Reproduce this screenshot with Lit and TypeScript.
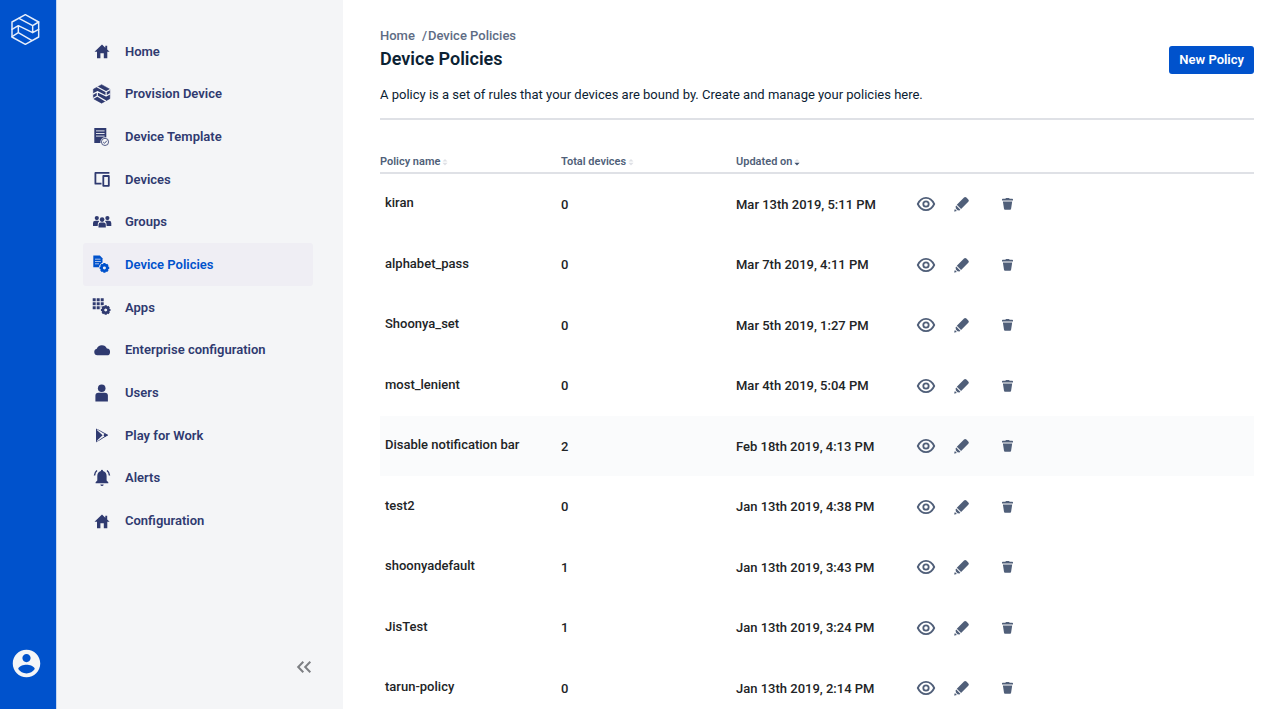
import { LitElement, html, css, svg } from "lit";
import { customElement, state } from "lit/decorators.js";
import { classMap } from "lit/directives/class-map.js";

const gear = (cx: number, cy: number) => svg`
  <g transform="translate(${cx} ${cy})">
    <circle r="5.6" fill="var(--icon-bg)"></circle>
    <circle r="2.8" fill="none" stroke="currentColor" stroke-width="2.6"></circle>
    <path d="M0-4.8V-3M0 3v1.8M-4.8 0H-3M3 0h1.8M-3.4-3.4l1.2 1.2M2.2 2.2l1.2 1.2M-3.4 3.4l1.2-1.2M2.2-2.2l1.2-1.2" stroke="currentColor" stroke-width="2.2"></path>
  </g>`;

const hexLines = svg`<path d="M56 55l41 22v21l-43-21v21l40 23M97 77l18-11M97 98l18-10M54 77l-19 11M54 98l-19 12"></path>`;

const home = svg`<path fill="currentColor" d="M10 3.6 2.5 10.8H5v6.5h3.4v-5h3.4v5h3.5v-6.5h2.3l-2.4-2.3V4.7h-1.9v2z"></path>`;

const icons = {
  home,
  provision: svg`<g transform="translate(1.2 .7) scale(.205) translate(-34 -43)" stroke-linejoin="round">
      <path d="M75 43l40 22v46l-40 22-40-22V65z" fill="currentColor" stroke="currentColor" stroke-width="3"></path>
      <g fill="none" stroke="var(--icon-bg)" stroke-width="6">
        <path d="M52 53l45 24 20-11M33 89l21-12 43 21 20-11M33 110l21-12 42 25M54 77v21M97 77v21"></path>
      </g></g>`,
  template: svg`<path fill="currentColor" d="M2.3 1h12v15h-12z"></path>
    <path d="M4 3.9h8.6M4 6.5h8.6M4 9.1h8.6" stroke="var(--icon-bg)" stroke-width=".9"></path>
    <circle cx="13" cy="14.9" r="4.6" fill="var(--icon-bg)"></circle>
    <circle cx="13" cy="14.9" r="3.6" fill="none" stroke="currentColor" stroke-width=".8"></circle>
    <path d="M11.2 15l1.3 1.3 2.4-2.6" fill="none" stroke="currentColor" stroke-width=".9"></path>`,
  devices: svg`<g fill="none" stroke="currentColor" stroke-width="1.8" stroke-linejoin="round">
    <path d="M17.4 3.9H3.4v10.8h6.1"></path><path d="M11.3 7h5.5v9.8h-5.5z"></path></g>`,
  groups: svg`<g fill="currentColor"><circle cx="4.8" cy="6.1" r="2.1"></circle><circle cx="15.4" cy="6.1" r="2.1"></circle>
    <path d="M1 14v-3q0-2.3 2.3-2.3h3q.6 0 1 .4Q5.4 10.600 5.700 14zM19.300 14v-3q0-2.300-2.300-2.300h-3q-.6 0-1 .4 1.900 1.500 1.600 4.900z"></path>
    <circle cx="10.100" cy="7.600" r="2.300"></circle><path d="M6.500 15.400v-2.700q0-2.300 2.300-2.300h2.700q2.300 0 2.300 2.300v2.700z"></path></g>`,
  policies: svg`<path fill="currentColor" d="M1.300.6h6.500l2.700 2.700v9H1.300z"></path>
    <path d="M3 4.200h5.500M3 6.500h5.800M3 8.800h4" stroke="var(--icon-bg)" stroke-width=".7"></path>${gear(12.400, 12.900)}`,
  apps: svg`<path fill="currentColor" d="M.7 1.300h3v3h-3zM4.700 1.300h3v3h-3zM8.700 1.300h3v3h-3zM.7 5.300h3v3h-3zM4.700 5.300h3v3h-3zM8.700 5.300h3v3h-3zM.7 9.300h3v3h-3zM4.700 9.300h3v3h-3zM8.700 9.300h3v3h-3z"></path>${gear(13.700, 13)}`,
  cloud: svg`<path fill="currentColor" d="M5.300 15.300a3.300 3.300 0 0 1-.5-6.500 5.400 5.400 0 0 1 10.100-.3 3.400 3.400 0 0 1-.5 6.800z"></path>`,
  users: svg`<g fill="currentColor"><circle cx="9.700" cy="5.200" r="3.800"></circle><path d="M3.400 18.500v-5.800q0-3 3-3h6.500q3 0 3 3v5.800z"></path></g>`,
  play: svg`<path d="M4.500 4l11 6-11 6.800z" fill="none" stroke="currentColor" stroke-width=".9" stroke-linejoin="round"></path>
    <path fill="currentColor" d="M4 4.300l6.600 5.900L4 16.500zM12.800 8.400l3.300 1.800-3.300 1.900-1.600-1.900z"></path>
    <path d="M5 4l7 6.200-7 6.500" fill="none" stroke="var(--icon-bg)" stroke-width=".5"></path>`,
  alerts: svg`<g fill="currentColor"><path d="M10 1.800q1 0 1 1.200 3.600 1 3.600 5v4.600l1.700 1.700v1H3.600v-1l1.700-1.700V8q0-4 3.600-5 0-1.200 1.100-1.200zM8.300 16.400h3.400q-.3 1.700-1.700 1.700t-1.700-1.700z"></path>
    <path d="M5 2.500Q2.700 4.200 2.500 7.500M15 2.500q2.300 1.700 2.500 5" fill="none" stroke="currentColor" stroke-width="1.500"></path></g>`,
};

type IconName = keyof typeof icons;

const NAV: { label: string; icon: IconName }[] = [
  { label: "Home", icon: "home" },
  { label: "Provision Device", icon: "provision" },
  { label: "Device Template", icon: "template" },
  { label: "Devices", icon: "devices" },
  { label: "Groups", icon: "groups" },
  { label: "Device Policies", icon: "policies" },
  { label: "Apps", icon: "apps" },
  { label: "Enterprise configuration", icon: "cloud" },
  { label: "Users", icon: "users" },
  { label: "Play for Work", icon: "play" },
  { label: "Alerts", icon: "alerts" },
  { label: "Configuration", icon: "home" },
];

const POLICIES: [string, number, string][] = [
  ["kiran", 0, "Mar 13th 2019, 5:11 PM"],
  ["alphabet_pass", 0, "Mar 7th 2019, 4:11 PM"],
  ["Shoonya_set", 0, "Mar 5th 2019, 1:27 PM"],
  ["most_lenient", 0, "Mar 4th 2019, 5:04 PM"],
  ["Disable notification bar", 2, "Feb 18th 2019, 4:13 PM"],
  ["test2", 0, "Jan 13th 2019, 4:38 PM"],
  ["shoonyadefault", 1, "Jan 13th 2019, 3:43 PM"],
  ["JisTest", 1, "Jan 13th 2019, 3:24 PM"],
  ["tarun-policy", 0, "Jan 13th 2019, 2:14 PM"],
];

@customElement("side-nav")
export class SideNav extends LitElement {
  @state() private active = "Device Policies";

  static styles = css`
    :host { display: flex; }
    .rail {
      display: flex; flex-direction: column; justify-content: space-between; align-items: center;
      box-sizing: border-box; width: 57px; padding: 13px 4px 29px 0;
      background: #0052cc; border-right: 1px solid #c5d7f1;
    }
    button { padding: 0; border: 0; background: none; cursor: pointer; display: block; }
    svg { display: block; }
    .logo { width: 30px; height: 33px; }
    .avatar { width: 33px; height: 33px; color: #f4f5f7; }
    .panel {
      display: flex; flex-direction: column; justify-content: space-between;
      box-sizing: border-box; width: 286px; padding: 30px 30px 34px 26px; background: #f4f5f7;
    }
    .list { display: grid; grid-auto-rows: 1fr; min-height: 512px; margin: 0; padding: 0; list-style: none; }
    .item {
      --icon-bg: #f4f5f7;
      display: flex; align-items: center; gap: 13px; box-sizing: border-box; height: 100%; padding-left: 9px;
      border-radius: 3px; color: #2f3a70; font-size: 13px; font-weight: 600; text-decoration: none;
    }
    .item.active { --icon-bg: #efeef4; background: #efeef4; color: #0052cc; }
    .icon { width: 20px; height: 20px; flex: none; }
    .collapse { align-self: flex-end; color: #7d7f83; }
  `;

  render() {
    return html`
      <div class="rail">
        <svg class="logo" viewBox="32 39 90 99" fill="none" stroke="#e6eefb" stroke-width="4.400" stroke-linejoin="round" stroke-linecap="round" role="img" aria-label="Logo">
          <path d="M75 44l40 22v45l-40 22-40-22V66z"></path>${hexLines}
        </svg>
        <button aria-label="Account">
          <svg class="avatar" viewBox="0 0 24 24"><path fill="currentColor" d="M12 2C6.480 2 2 6.480 2 12s4.480 10 10 10 10-4.480 10-10S17.520 2 12 2zm0 3c1.660 0 3 1.340 3 3s-1.340 3-3 3-3-1.340-3-3 1.340-3 3-3zm0 14.200c-2.500 0-4.710-1.280-6-3.220.03-1.990 4-3.080 6-3.080s5.970 1.090 6 3.080c-1.290 1.940-3.500 3.220-6 3.220z"></path></svg>
        </button>
      </div>
      <nav class="panel">
        <ul class="list">
          ${NAV.map((n) => html`<li>
            <a class=${classMap({ item: true, active: n.label === this.active })} href="#" @click=${(e: Event) => { e.preventDefault(); this.active = n.label; }}>
              <svg class="icon" viewBox="0 0 20 20" aria-hidden="true">${icons[n.icon]}</svg>
              <span>${n.label}</span>
            </a></li>`)}
        </ul>
        <button class="collapse" aria-label="Collapse menu">
          <svg width="18" height="16" viewBox="0 0 18 16" fill="none" stroke="currentColor" stroke-width="2"><path d="M8.300 2.800 3.200 8l5.100 5.200M15.300 2.800 10.200 8l5.100 5.200"></path></svg>
        </button>
      </nav>`;
  }
}

@customElement("policy-table")
export class PolicyTable extends LitElement {
  static styles = css`
    :host { display: block; }
    table { width: 100%; border-collapse: separate; border-spacing: 0; table-layout: fixed; }
    .name { width: 181px; }
    .total { width: 175px; }
    .updated { width: 180px; }
    th { padding: 0 0 3px; border-bottom: 2px solid #dfe1e6; text-align: left; line-height: 14px; }
    td { padding: 0; }
    .sort {
      display: flex; align-items: center; gap: 2px; padding: 0; border: 0; background: none;
      font: 600 11px/14px var(--font); color: #505f79; cursor: pointer;
    }
    .row { height: 60px; font-size: 13px; font-weight: 500; color: #222426; }
    .row:nth-child(even) { height: 61px; }
    .row.shaded { background: #fafbfc; }
    .row .label { padding: 0 0 3px 5px; }
    .actions { display: flex; align-items: center; gap: 16px; color: #505f79; }
    .actions button { width: 20px; height: 20px; padding: 0; border: 0; background: none; color: inherit; cursor: pointer; }
    .actions button:last-child { margin-left: 10px; }
    svg { display: block; }
  `;

  private header(label: string, sorted = false) {
    return html`<button class="sort">${label}
      <svg width="6" height="8" viewBox="0 0 6 8"><path d="M3 1l2.500 2.500h-5z" fill="#dfe1e6"></path><path d="M3 7.400L.4 4.800h5.200z" fill=${sorted ? "#42526e" : "#dfe1e6"}></path></svg>
    </button>`;
  }

  render() {
    return html`<table>
      <thead><tr>
        <th class="name">${this.header("Policy name")}</th>
        <th class="total">${this.header("Total devices")}</th>
        <th class="updated">${this.header("Updated on", true)}</th>
        <th></th>
      </tr></thead>
      <tbody>
        ${POLICIES.map(([name, total, updated]) => html`<tr class=${classMap({ row: true, shaded: total === 2 })}>
          <td class="label">${name}</td><td>${total}</td><td>${updated}</td>
          <td><div class="actions">
            <button aria-label="View ${name}"><svg width="20" height="20" viewBox="0 0 20 20" fill="none" stroke="currentColor">
              <path stroke-width="1.800" d="M1.800 10Q4.600 3.900 10 3.900T18.200 10Q15.400 16.100 10 16.100T1.800 10z"></path><circle cx="10" cy="10" r="2.700" stroke-width="1.800"></circle></svg></button>
            <button aria-label="Edit ${name}"><svg width="20" height="20" viewBox="0 0 20 20" fill="currentColor">
              <path d="M12 3.500q1.200-1.200 2.400 0l1.900 1.900q1.200 1.200 0 2.400l-7.200 7.200-4.300-4.300zM4.200 11.500l4.200 4.200-1 .8-1.900-.3-1.600-1.700-.3-1.900zM2.900 14.900l2 2-2.200.6q-.7.1-.5-.5z"></path></svg></button>
            <button aria-label="Delete ${name}"><svg width="20" height="20" viewBox="0 0 20 20" fill="currentColor">
              <path d="M4 5.500q0-.7.700-.7h2.700q.1-.8.900-.8h2.500q.7 0 .8.800h2.700q.7 0 .7.700v1.100H4zM4.900 7.500h9.300l-1.100 7.300q-.1.900-1 .9H7q-.9 0-1-.9z"></path></svg></button>
          </div></td>
        </tr>`)}
      </tbody>
    </table>`;
  }
}

@customElement("app-root")
export class AppRoot extends LitElement {
  static styles = css`
    :host {
      --font: "Roboto", "Noto Sans", sans-serif;
      display: flex; height: 100vh; overflow: hidden; background: #fff; font-family: var(--font);
    }
    side-nav { flex: none; }
    .main { flex: 1; min-width: 0; overflow-y: auto; scrollbar-width: none; padding: 28px 26px 0 37px; }
    .head { display: flex; justify-content: space-between; align-items: flex-end; }
    .crumbs { display: flex; gap: 7px; font-size: 13px; line-height: 16px; font-weight: 500; color: #5e6c84; }
    .crumbs a { color: inherit; text-decoration: none; }
    .here { display: flex; gap: 1px; }
    .title { margin: 3px 0 0; font-size: 18px; line-height: 24px; font-weight: 600; color: #0b2233; }
    .intro { margin: 0; padding: 16px 0 15px; border-bottom: 2px solid #dfe1e6; font-size: 13px; line-height: 16px; color: #0b2233; }
    .new {
      height: 28px; margin-bottom: -3px; padding: 0 10px; border: 0; border-radius: 3px;
      background: #0052cc; color: #fff; font: 600 13px/16px var(--font); cursor: pointer;
    }
    policy-table { margin-top: 35px; }
  `;

  render() {
    return html`
      <side-nav></side-nav>
      <main class="main">
        <header class="head">
          <div>
            <div class="crumbs"><a href="#">Home</a><span class="here"><span>/</span><span>Device Policies</span></span></div>
            <h1 class="title">Device Policies</h1>
          </div>
          <button class="new">New Policy</button>
        </header>
        <p class="intro">A policy is a set of rules that your devices are bound by. Create and manage your policies here.</p>
        <policy-table></policy-table>
      </main>`;
  }
}
